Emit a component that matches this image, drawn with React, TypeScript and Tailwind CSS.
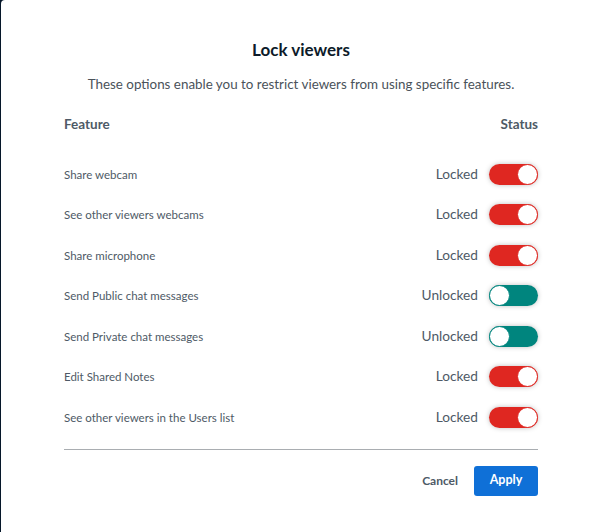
import React from 'react';

interface LockRow {
  label: string;
  locked: boolean;
}

const rows: LockRow[] = [
  { label: 'Share webcam', locked: true },
  { label: 'See other viewers webcams', locked: true },
  { label: 'Share microphone', locked: true },
  { label: 'Send Public chat messages', locked: false },
  { label: 'Send Private chat messages', locked: false },
  { label: 'Edit Shared Notes', locked: true },
  { label: 'See other viewers in the Users list', locked: true },
];

const Toggle: React.FC<{ on: boolean }> = ({ on }) => (
  <div
    className={`flex h-[21px] w-[49px] items-center rounded-full shadow-[0_0_5px_rgba(0,0,0,0.25)] ${
      on ? 'justify-end bg-[#df2721]' : 'justify-start bg-[#00857e]'
    }`}
  >
    <div
      className={`h-[21px] w-[21px] rounded-full border bg-white ${
        on ? 'border-[#df2721]' : 'border-[#00857e]'
      }`}
    />
  </div>
);

export default function App() {
  return (
    <div
      className="flex h-[532px] w-[600px] bg-[#06172a]"
      style={{ fontFamily: '"Lato", "Open Sans", sans-serif' }}
    >
      <div className="ml-[1px] flex flex-1 flex-col rounded-tl-[4px] bg-white pl-[63px] pr-[62px] pt-[39px]">
        <h1 className="text-center text-[17px] font-bold leading-[22px] text-[#0d1b2a]">Lock viewers</h1>
        <p className="mt-[13px] text-center text-[13.4px] leading-[20px] text-[#4a525a]">
          These options enable you to restrict viewers from using specific features.
        </p>

        <div className="mt-[21px] flex items-center justify-between text-[13.5px] font-bold leading-[18px] text-[#4e5a66]">
          <span>Feature</span>
          <span>Status</span>
        </div>

        <div className="mt-[21px] flex flex-col">
          {rows.map((row) => (
            <div key={row.label} className="flex h-[40.5px] items-center justify-between">
              <span className="text-[11.5px] text-[#4e5a66]">{row.label}</span>
              <div className="flex items-center gap-[11px]">
                <span className="text-[13.7px] text-[#4e5a66]">{row.locked ? 'Locked' : 'Unlocked'}</span>
                <Toggle on={row.locked} />
              </div>
            </div>
          ))}
        </div>

        <div className="mt-[11px] h-px bg-[#a9adb1]" />

        <div className="mt-[16px] flex items-center justify-end gap-[16px]">
          <button className="text-[12px] font-bold text-[#4e5a66]">Cancel</button>
          <button className="h-[30px] w-[64px] rounded-[3px] bg-[#0f70d7] text-[12.5px] font-bold text-white">
            Apply
          </button>
        </div>
      </div>
    </div>
  );
}
